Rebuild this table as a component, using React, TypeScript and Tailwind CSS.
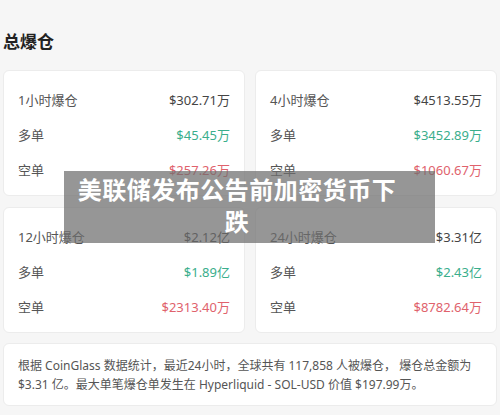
import React from "react";

type Row = { label: string; value: string; tone: "plain" | "long" | "short" };
type Stat = { title: string; total: string; long: string; short: string };

const stats: Stat[] = [
  { title: "1小时爆仓", total: "$302.71万", long: "$45.45万", short: "$257.26万" },
  { title: "4小时爆仓", total: "$4513.55万", long: "$3452.89万", short: "$1060.67万" },
  { title: "12小时爆仓", total: "$2.12亿", long: "$1.89亿", short: "$2313.40万" },
  { title: "24小时爆仓", total: "$3.31亿", long: "$2.43亿", short: "$8782.64万" },
];

const toneClass = {
  plain: "text-[#444]",
  long: "text-[#3aae8c]",
  short: "text-[#e0626c]",
};

function StatCard({ stat }: { stat: Stat }) {
  const rows: Row[] = [
    { label: stat.title, value: stat.total, tone: "plain" },
    { label: "多单", value: stat.long, tone: "long" },
    { label: "空单", value: stat.short, tone: "short" },
  ];
  return (
    <div className="bg-white rounded-md border border-[#ececec] px-[14px] pt-[19px] pb-[13px] flex flex-col gap-[13px]">
      {rows.map((r) => (
        <div key={r.label} className="flex items-center justify-between h-[22px]">
          <span className="text-[13px] text-[#555]">{r.label}</span>
          <span className={`text-[13px] ${toneClass[r.tone]}`}>{r.value}</span>
        </div>
      ))}
    </div>
  );
}

export default function App() {
  return (
    <div
      className="relative w-[500px] h-[415px] bg-[#f6f6f6] overflow-hidden px-[3px]"
      style={{ fontFamily: '"Noto Sans", "Noto Sans CJK SC", sans-serif' }}
    >
      <h1 className="pt-[30px] h-[70px] text-[17px] font-bold text-[#222] leading-[24px]">总爆仓</h1>

      <div className="grid grid-cols-2 gap-x-[10px] gap-y-[11px]">
        {stats.map((s) => (
          <StatCard key={s.title} stat={s} />
        ))}
      </div>

      <div className="mt-[10px] bg-white rounded-md border border-[#ececec] px-[14px] pt-[12px] pb-[11px] text-[12px] leading-[19px] text-[#555]">
        根据 CoinGlass 数据统计，最近24小时，全球共有 117,858 人被爆仓， 爆仓总金额为 $3.31 亿。最大单笔爆仓单发生在 Hyperliquid - SOL-USD 价值 $197.99万。
      </div>

      {/* headline banner over the cards */}
      <div className="absolute left-[64px] top-[171px] w-[371px] h-[72px] bg-[rgba(110,110,110,0.72)] pl-[12px] pt-[3px]">
        <div className="w-[322px] text-center text-white font-bold text-[24px] leading-[32px] tracking-[0.5px]">
          美联储发布公告前加密货币下跌
        </div>
      </div>
    </div>
  );
}
